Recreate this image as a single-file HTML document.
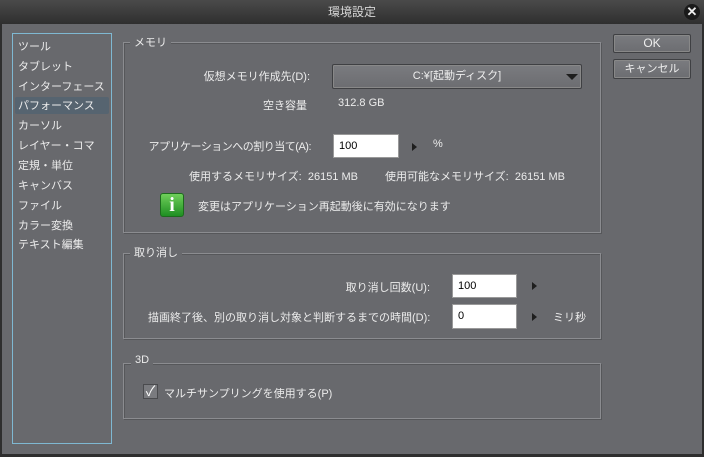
<!DOCTYPE html>
<html><head><meta charset="utf-8"><style>
*{margin:0;padding:0;box-sizing:border-box}
body{width:704px;height:457px;background:#2e2e2e;font-family:"Liberation Sans","Noto Sans CJK JP",sans-serif;font-size:11px;color:#ececec;position:relative;overflow:hidden}
.a{position:absolute;white-space:nowrap}
.r{position:absolute;white-space:nowrap;text-align:right;width:300px}
#title{left:0;top:0;width:704px;height:24px;background:linear-gradient(#4a4a4a,#2f2f2f);text-align:center;line-height:24px;font-size:12px;color:#d8d8d8}
#body{left:2px;top:24px;width:700px;height:430px;background:#68696d}
#list{left:12px;top:33px;width:100px;height:411px;border:1px solid #7fb8d2}
.li{position:absolute;left:5px;font-size:11px}
#sel{left:15px;top:97px;width:94px;height:17px;background:#566470;border-radius:2px}
.fr{position:absolute;border:1px solid #8b8c90;box-shadow:inset 1px 1px 0 #56575a,1px 1px 0 #56575a}
.lg{position:absolute;background:#68696d;padding:0 4px}
.btn{position:absolute;border:1px solid #3f4043;background:linear-gradient(#7a7b7f,#6c6d71);border-radius:2px;text-align:center;color:#eee;box-shadow:inset 0 0 0 1px #888}
.in{position:absolute;background:#fff;border:1px solid #999;color:#000;padding-left:5px;line-height:22px}
.tri{position:absolute;width:0;height:0;border-top:4px solid transparent;border-bottom:4px solid transparent;border-left:5px solid #1e1e1e}
</style></head><body>
<div id="title" class="a">環境設定</div>
<div class="a" style="left:684px;top:4px;width:16px;height:16px;border-radius:8px;background:#1a1a1a;color:#eee;text-align:center;line-height:16px;font-weight:bold;font-size:13px">✕</div>
<div id="body" class="a"></div>
<div id="sel" class="a"></div>
<div id="list" class="a">
<div class="li" style="top:4px">ツール</div>
<div class="li" style="top:24px">タブレット</div>
<div class="li" style="top:44px">インターフェース</div>
<div class="li" style="top:63px">パフォーマンス</div>
<div class="li" style="top:83px">カーソル</div>
<div class="li" style="top:103px">レイヤー・コマ</div>
<div class="li" style="top:123px">定規・単位</div>
<div class="li" style="top:143px">キャンバス</div>
<div class="li" style="top:163px">ファイル</div>
<div class="li" style="top:183px">カラー変換</div>
<div class="li" style="top:202px">テキスト編集</div>
</div>

<div class="fr" style="left:123px;top:42px;width:478px;height:191px"></div>
<div class="lg" style="left:130px;top:34px">メモリ</div>
<div class="fr" style="left:123px;top:253px;width:478px;height:86px"></div>
<div class="lg" style="left:130px;top:244px">取り消し</div>
<div class="fr" style="left:123px;top:363px;width:478px;height:56px"></div>
<div class="lg" style="left:131px;top:354px">3D</div>

<div class="btn" style="left:613px;top:34px;width:78px;height:19px;line-height:16px;font-size:12px">OK</div>
<div class="btn" style="left:613px;top:59px;width:78px;height:20px;line-height:18px">キャンセル</div>

<div class="r" style="left:10px;top:68px">仮想メモリ作成先(D):</div>
<div class="btn" style="left:332px;top:64px;width:250px;height:25px;line-height:22px">C:¥[起動ディスク]</div>
<div class="a" style="left:566px;top:74px;border-left:6px solid transparent;border-right:6px solid transparent;border-top:6px solid #1e1e1e"></div>
<div class="a" style="left:263px;top:97px">空き容量</div>
<div class="a" style="left:338px;top:97px">312.8 GB</div>

<div class="r" style="left:11px;top:138px;letter-spacing:-0.5px">アプリケーションへの割り当て(A):</div>
<div class="in" style="left:333px;top:134px;width:66px;height:24px">100</div>
<div class="tri" style="left:412px;top:143px"></div>
<div class="a" style="left:433px;top:138px">%</div>
<div class="a" style="left:189px;top:168px">使用するメモリサイズ: &nbsp;26151 MB</div>
<div class="a" style="left:385px;top:168px">使用可能なメモリサイズ: &nbsp;26151 MB</div>
<div class="a" style="left:160px;top:193px;width:24px;height:24px;border-radius:3px;background:linear-gradient(#6fcf5a,#1f8f22);border:1px solid #1d6b1d;color:#fff;font-weight:bold;font-family:'Liberation Serif',serif;font-size:20px;text-align:center;line-height:22px">i</div>
<div class="a" style="left:198px;top:198px">変更はアプリケーション再起動後に有効になります</div>

<div class="r" style="left:130px;top:279px">取り消し回数(U):</div>
<div class="in" style="left:452px;top:274px;width:65px;height:24px">100</div>
<div class="tri" style="left:532px;top:282px"></div>
<div class="a" style="left:148px;top:309px">描画終了後、別の取り消し対象と判断するまでの時間(D):</div>
<div class="in" style="left:452px;top:304px;width:65px;height:25px">0</div>
<div class="tri" style="left:532px;top:313px"></div>
<div class="a" style="left:553px;top:309px">ミリ秒</div>

<div class="a" style="left:143px;top:384px;width:15px;height:15px;background:#7a7b7f;border:1px solid #4a4b4e;color:#fff;font-size:14px;line-height:13px;text-align:center">✓</div>
<div class="a" style="left:164px;top:385px">マルチサンプリングを使用する(P)</div>
</body></html>
